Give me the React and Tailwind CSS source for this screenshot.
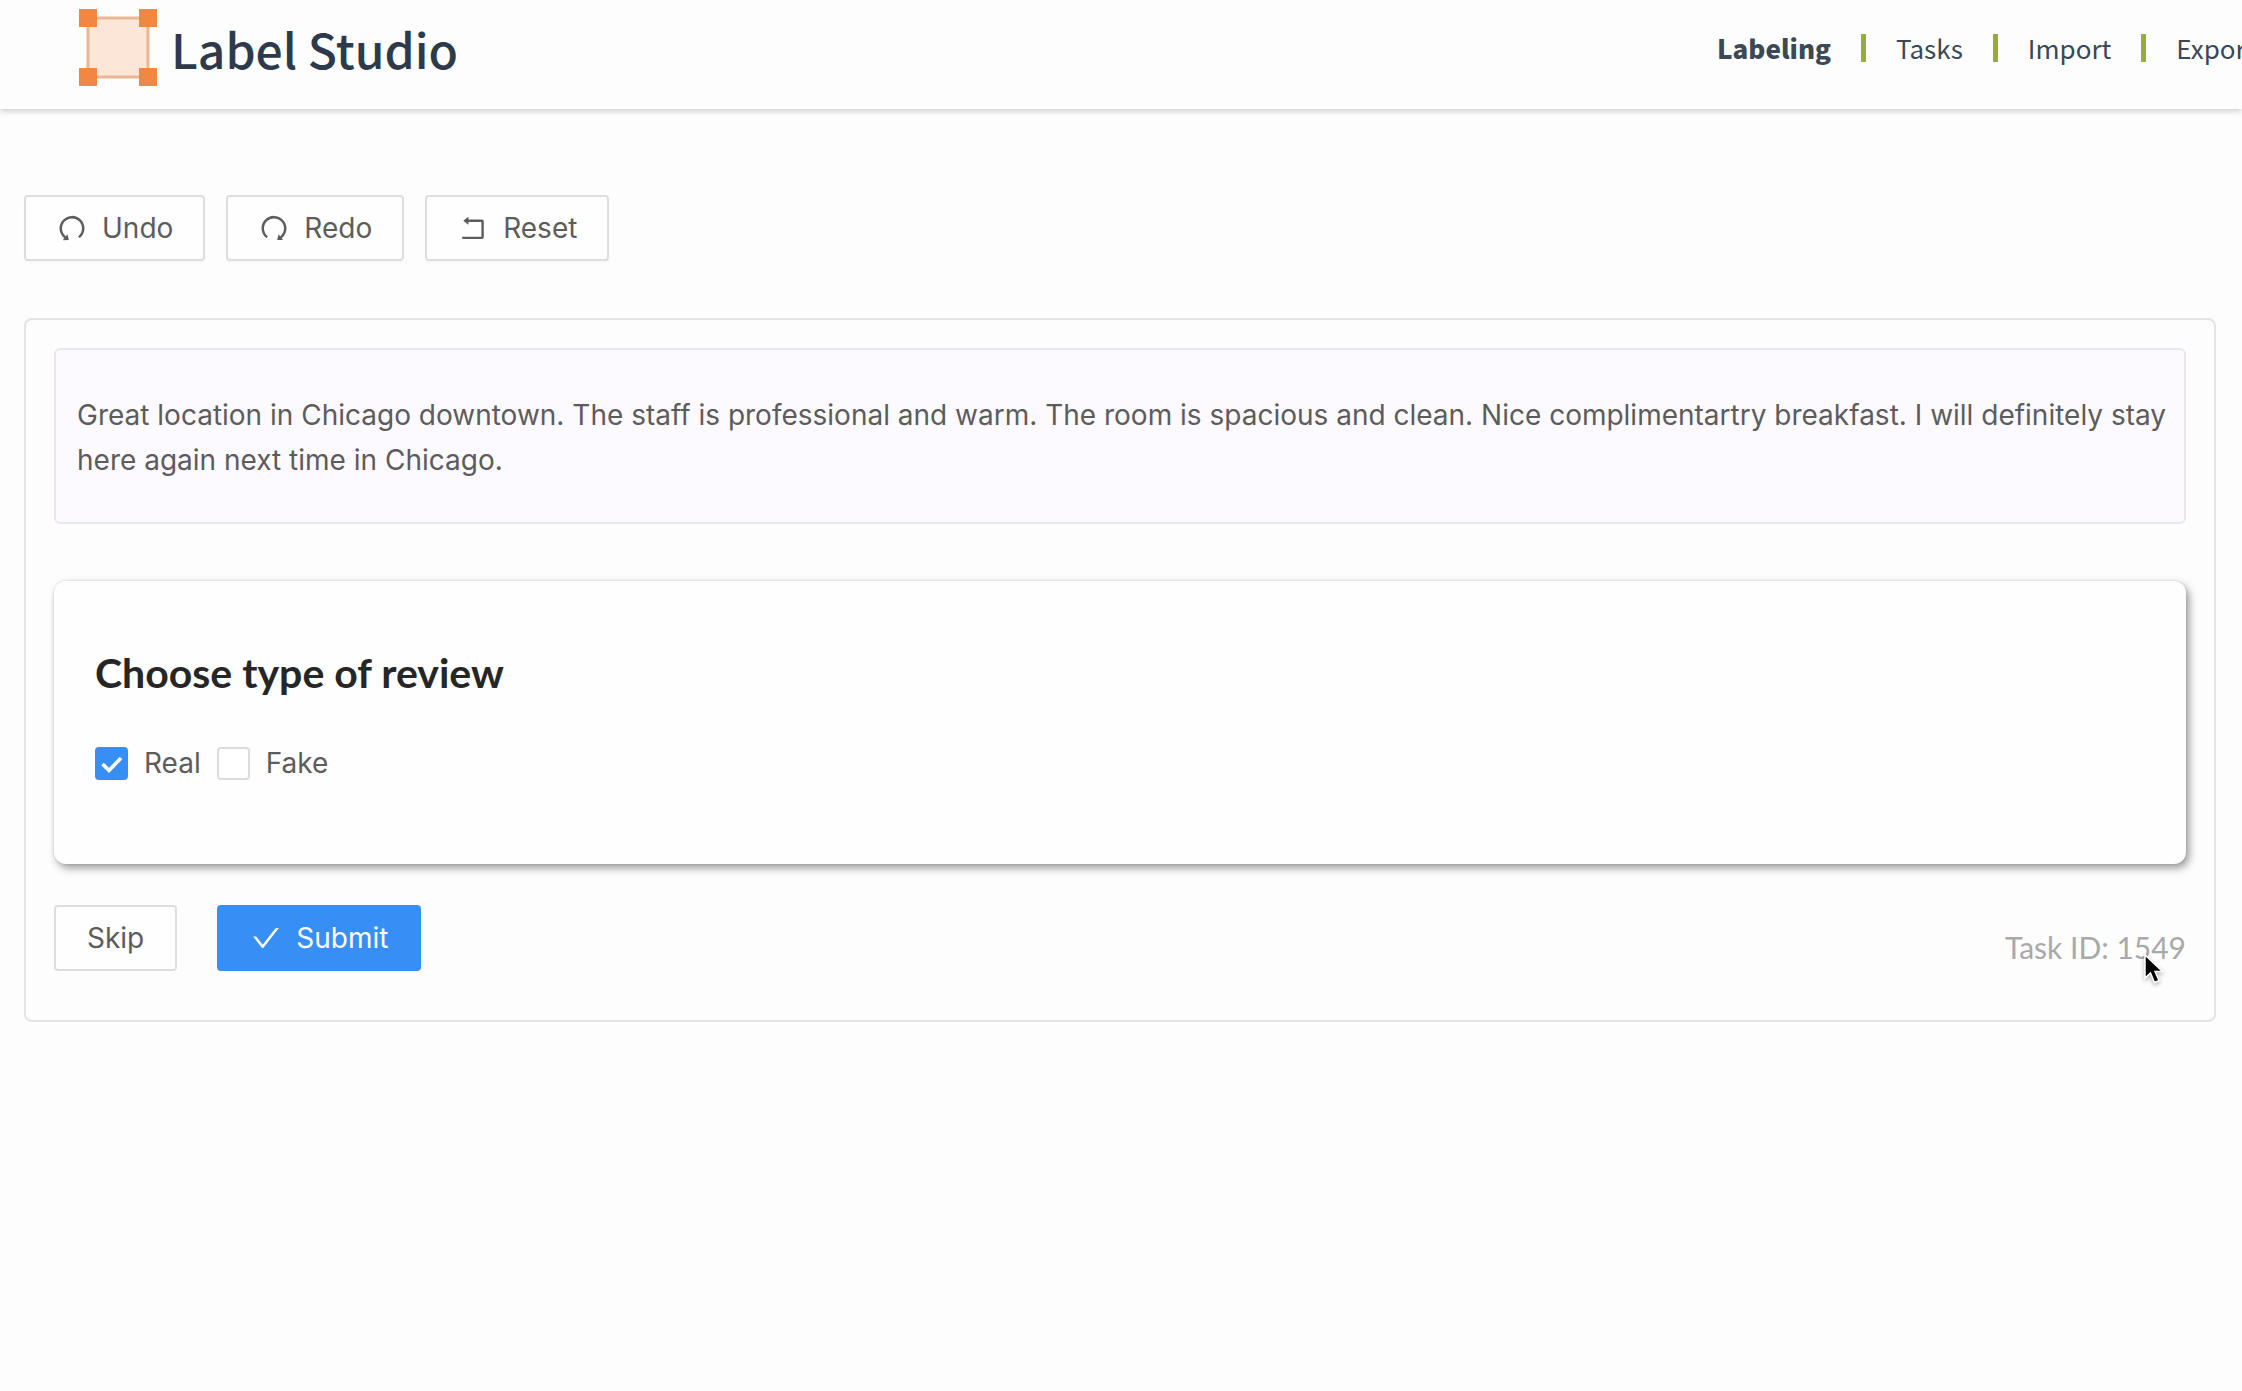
import React, { useState } from "react"
import { AiOutlineUndo, AiOutlineRedo, AiOutlineRollback, AiOutlineCheck } from "react-icons/ai"

const navLinks = ["Labeling", "Tasks", "Import", "Export"]

const task = {
  id: 1549,
  text: "Great location in Chicago downtown. The staff is professional and warm. The room is spacious and clean. Nice complimentartry breakfast. I will definitely stay here again next time in Chicago.",
}

function Logo() {
  return (
    <a href="#" className="flex items-center gap-[14px]">
      <svg width="78" height="78" viewBox="0 0 78 78" aria-hidden="true">
        <rect x="9" y="9" width="60" height="59" fill="#fce6d8" stroke="#eab796" strokeWidth="3" />
        <rect x="0" y="0" width="18" height="18" fill="#f08742" />
        <rect x="60" y="0" width="18" height="18" fill="#f08742" />
        <rect x="0" y="59" width="18" height="18" fill="#f08742" />
        <rect x="60" y="59" width="18" height="18" fill="#f08742" />
      </svg>
      <span className="font-['Noto_Sans_CJK_SC',sans-serif] font-medium text-[48px] leading-[78px] text-[#2c3a4b] whitespace-nowrap">
        Label Studio
      </span>
    </a>
  )
}

function ToolButton({ icon, children, onClick }) {
  return (
    <button
      className="h-[66px] px-[30px] flex items-center gap-[14px] rounded-sm border-2 border-[#dedede] bg-[#fefefe] shadow-[0_2px_2px_rgba(0,0,0,0.03)]"
      onClick={onClick}
    >
      {icon}
      {children}
    </button>
  )
}

function Choice({ label, checked, onChange }) {
  return (
    <label className="flex items-center gap-4">
      <span className="relative flex">
        <input
          type="checkbox"
          checked={checked}
          onChange={onChange}
          className="appearance-none size-[33px] rounded-sm border-2 border-[#dcdcdc] bg-white checked:bg-[#378ef5] checked:border-[#378ef5]"
        />
        {checked && (
          <svg className="absolute inset-0 pointer-events-none" width="33" height="33" viewBox="0 0 33 33" fill="none">
            <path d="M7.500 17l6.500 6.500L26 11" stroke="#fff" strokeWidth="3.600" />
          </svg>
        )}
      </span>
      {label}
    </label>
  )
}

export default function App() {
  const [choices, setChoices] = useState({ Real: true, Fake: false })

  const toggle = (name) => setChoices((prev) => ({ ...prev, [name]: !prev[name] }))

  const reset = () => setChoices({ Real: false, Fake: false })

  return (
    <div className="min-h-screen overflow-x-hidden bg-[#fdfdfd] font-['Inter','Liberation_Sans',sans-serif] text-[28px] leading-[45px] text-[#5c5c5c]">
      {/* HEADER */}
      <header className="flex items-start justify-between pl-[79px] pt-[9px] pb-[22px] shadow-[0_2px_6px_rgba(0,0,0,0.2)]">
        <Logo />
        <nav className="w-[525px] pt-4 flex items-center gap-[30px] overflow-hidden whitespace-nowrap font-['Noto_Sans_CJK_SC',sans-serif] text-[26px] leading-[45px] text-[#3b4856]">
          {navLinks.map((link, i) => (
            <React.Fragment key={link}>
              {i > 0 && <span className="w-[5px] h-[28px] shrink-0 bg-[#93ad35]" />}
              <a href="#" className={i === 0 ? "font-black" : ""}>
                {link}
              </a>
            </React.Fragment>
          ))}
        </nav>
      </header>

      <main className="pl-6 pr-[26px] pt-[86px]">
        {/* TOOLBAR */}
        <div className="flex gap-[21px]">
          <ToolButton icon={<AiOutlineUndo size={32} />}>Undo</ToolButton>
          <ToolButton icon={<AiOutlineRedo size={32} />}>Redo</ToolButton>
          <ToolButton icon={<AiOutlineRollback size={32} />} onClick={reset}>
            Reset
          </ToolButton>
        </div>

        {/* TASK */}
        <section className="mt-[57px] px-7 pt-7 pb-[49px] rounded-lg border-2 border-[#e4e4e4]">
          <div className="pl-[21px] pr-3 pt-[43px] pb-[39px] rounded-md border-2 border-[#e8e8ea] bg-[#fcfafe]">
            <p>{task.text}</p>
          </div>

          <div className="mt-[57px] px-[41px] pt-[66px] pb-[78px] rounded-xl bg-[#fefefe] shadow-[3px_4px_8px_rgba(0,0,0,0.4),0_0_3px_rgba(0,0,0,0.1)]">
            <h2 className="font-['Lato',sans-serif] font-bold text-[41px] leading-[52px] text-[#262626]">
              Choose type of review
            </h2>
            <div className="mt-[42px] flex gap-4">
              {Object.keys(choices).map((name) => (
                <Choice key={name} label={name} checked={choices[name]} onChange={() => toggle(name)} />
              ))}
            </div>
          </div>

          <div className="mt-[41px] flex items-start justify-between">
            <div className="flex gap-10">
              <button className="h-[66px] px-[31px] rounded-sm border-2 border-[#dedede] bg-[#fefefe]">Skip</button>
              <button className="h-[66px] px-[31px] flex items-center gap-[14px] rounded-sm border-2 border-[#378ef5] bg-[#378ef5] text-white">
                <AiOutlineCheck size={32} />
                Submit
              </button>
            </div>
            <div className="relative pt-5 font-['Lato',sans-serif] text-[30px] text-[#a9a9a9]">
              Task ID: {task.id}
              <svg
                className="absolute right-[21px] top-[48px] drop-shadow-[0_2px_2px_rgba(0,0,0,0.3)]"
                width="22"
                height="32"
                viewBox="0 0 22 32"
              >
                <path
                  d="M2 2v23l5.500-5 4 9.500 4.500-2-4-9h7.500z"
                  fill="#000"
                  stroke="#fff"
                  strokeWidth="1.500"
                />
              </svg>
            </div>
          </div>
        </section>
      </main>
    </div>
  )
}
